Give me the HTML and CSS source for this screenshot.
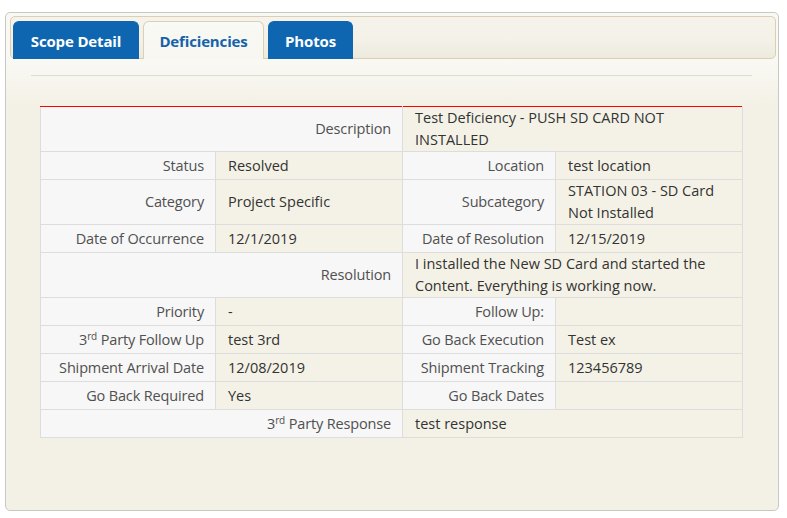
FILE: index.html
```html
<!DOCTYPE html>
<html>
<head>
<meta charset="utf-8">
<link rel="stylesheet" href="styles.css">
</head>
<body>
<div class="panel">
  <div class="tabbar">
    <div class="tab">Scope Detail</div>
    <div class="tab active">Deficiencies</div>
    <div class="tab">Photos</div>
  </div>
  <div class="content">
    <div class="rule"></div>
    <table class="detail">
      <colgroup>
        <col class="c1"><col class="c2"><col class="c3"><col class="c4">
      </colgroup>
      <tr>
        <td class="lbl" colspan="2">Description</td>
        <td class="val" colspan="2">Test Deficiency - PUSH SD CARD NOT INSTALLED</td>
      </tr>
      <tr>
        <td class="lbl">Status</td><td class="val">Resolved</td>
        <td class="lbl">Location</td><td class="val">test location</td>
      </tr>
      <tr>
        <td class="lbl">Category</td><td class="val">Project Specific</td>
        <td class="lbl">Subcategory</td><td class="val">STATION 03 - SD Card Not Installed</td>
      </tr>
      <tr>
        <td class="lbl">Date of Occurrence</td><td class="val">12/1/2019</td>
        <td class="lbl">Date of Resolution</td><td class="val">12/15/2019</td>
      </tr>
      <tr>
        <td class="lbl" colspan="2">Resolution</td>
        <td class="val" colspan="2">I installed the New SD Card and started the Content. Everything is working now.</td>
      </tr>
      <tr>
        <td class="lbl">Priority</td><td class="val">-</td>
        <td class="lbl">Follow Up:</td><td class="val"></td>
      </tr>
      <tr>
        <td class="lbl">3<sup>rd</sup> Party Follow Up</td><td class="val">test 3rd</td>
        <td class="lbl">Go Back Execution</td><td class="val">Test ex</td>
      </tr>
      <tr>
        <td class="lbl">Shipment Arrival Date</td><td class="val">12/08/2019</td>
        <td class="lbl">Shipment Tracking</td><td class="val">123456789</td>
      </tr>
      <tr>
        <td class="lbl">Go Back Required</td><td class="val">Yes</td>
        <td class="lbl">Go Back Dates</td><td class="val"></td>
      </tr>
      <tr>
        <td class="lbl" colspan="2">3<sup>rd</sup> Party Response</td>
        <td class="val" colspan="2">test response</td>
      </tr>
    </table>
  </div>
</div>
</body>
</html>
```
FILE: styles.css
```css
html, body {
  margin: 0;
  padding: 0;
  background: #ffffff;
}
body {
  font-family: "Open Sans", "Noto Sans", sans-serif;
  font-size: 14.5px;
  color: #333333;
}
.panel {
  box-sizing: border-box;
  margin: 12px 0 0 5px;
  width: 774px;
  height: 499px;
  border: 1px solid #c8c8c4;
  border-radius: 5px;
  background: linear-gradient(#f9f8f3 0px, #f9f8f3 50px, #f3f1e5 95px, #f3f1e5 100%);
  padding: 3px 2px 0 4px;
}
.tabbar {
  display: flex;
  gap: 4px;
  height: 37px;
  padding: 4px 2px 0 2px;
  border: 1px solid #dacfb2;
  border-radius: 5px;
  background: linear-gradient(#f5f3eb 0%, #f3f1e8 55%, #edeadd 100%);
}
.tab {
  box-sizing: border-box;
  height: 38px;
  padding: 0;
  display: flex;
  align-items: center;
  justify-content: center;
  white-space: nowrap;
  background: #0e66b1;
  color: #ffffff;
  font-weight: 700;
  font-size: 15px;
  border: 1px solid #0e66b1;
  border-bottom: none;
  border-radius: 6px 6px 0 0;
  letter-spacing: -0.15px;
}
.tab:first-child { width: 126px; }
.tab:nth-child(2) { width: 121px; }
.tab:nth-child(3) { width: 85px; }
.tab.active {
  background: linear-gradient(#f9f9f5, #f7f6f0);
  color: #1462aa;
  border: 1px solid #d9d0b5;
  border-bottom: none;
}
.content {
  padding: 16px 0 0 0;
}
.rule {
  margin: 0 0 0 21px;
  width: 721px;
  height: 1px;
  background: #dcdbd4;
}
.detail {
  margin: 30px 0 0 30px;
  width: 702px;
  table-layout: fixed;
  border-collapse: collapse;
  border-top: 1px solid #ff0000;
}
.c1 { width: 175px; }
.c2 { width: 187px; }
.c3 { width: 153px; }
.c4 { width: 187px; }
.detail td {
  border: 1px solid #dddddd;
  height: 27px;
  padding: 0 11px 0 12px;
  line-height: 22px;
  vertical-align: middle;
}
.detail tr:first-child td {
  border-top: 1px solid #ff0000;
}
.lbl {
  background: #f7f7f7;
  color: #505050;
  text-align: right;
  white-space: nowrap;
  letter-spacing: -0.15px;
}
.val {
  background: #f4f2e7;
  color: #333333;
}
sup {
  font-size: 10px;
  line-height: 0;
  vertical-align: 0.55em;
}
```
